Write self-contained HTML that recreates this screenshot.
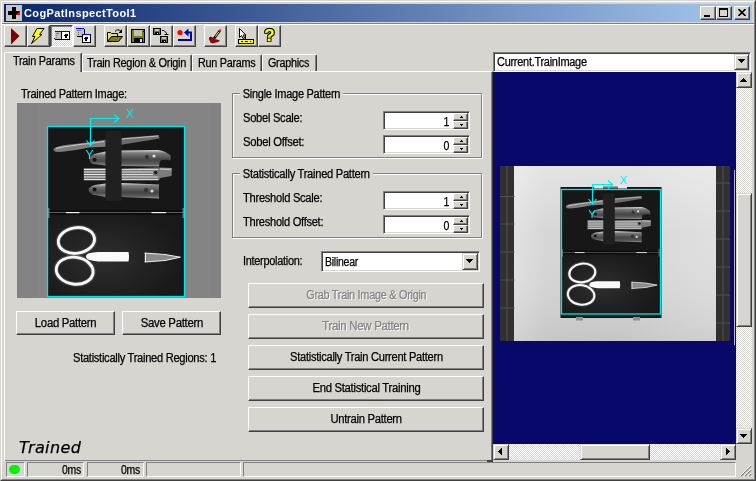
<!DOCTYPE html>
<html><head><meta charset="utf-8"><title>CogPatInspectTool1</title>
<style>
*{box-sizing:border-box;margin:0;padding:0}
html,body{width:756px;height:481px;overflow:hidden;background:#d6d5cf}
body{position:relative;will-change:transform;-webkit-text-stroke:.25px;font-family:"Liberation Sans",sans-serif;font-size:12px;color:#000}
.a{position:absolute}
.t{position:absolute;white-space:nowrap;line-height:14px;height:14px;letter-spacing:-.3px;transform-origin:0 0}
.pbtn span{display:inline-block;letter-spacing:-.3px;transform-origin:50% 50%}
.btn{position:absolute;background:#d6d5cf;border:1px solid;border-color:#fff #404040 #404040 #fff;box-shadow:inset -1px -1px 0 #808080}
.sbtn{position:absolute;background:#d6d5cf;border:1px solid;border-color:#d6d5cf #404040 #404040 #d6d5cf;box-shadow:inset 1px 1px 0 #fff,inset -1px -1px 0 #808080}
.tb{position:absolute;top:25px;width:23px;height:22px;border:1px solid;border-color:#fff #404040 #404040 #fff;box-shadow:inset -1px -1px 0 #808080}
.tb svg{position:absolute;left:0;top:0}
.sunk{position:absolute;background:#fff;border:1px solid;border-color:#808080 #fff #fff #808080;box-shadow:inset 1px 1px 0 #404040,inset -1px -1px 0 #d6d5cf}
.grp{position:absolute;border:1px solid #808080;box-shadow:1px 1px 0 #fff,inset 1px 1px 0 #fff}
.pbtn{position:absolute;height:25px;text-align:center;line-height:22px;white-space:nowrap;border:1px solid;border-color:#fff #404040 #404040 #fff;box-shadow:inset -1px -1px 0 #808080}
.sp{position:absolute;border:1px solid #808080;border-color:#808080 #fff #fff #808080;height:15px;top:462px}
.chk{background-image:conic-gradient(#fff 25%,#d6d5cf 0 50%,#fff 0 75%,#d6d5cf 0);background-size:2px 2px}
</style></head><body>
<!-- window frame -->
<div class="a" style="left:0;top:0;width:756px;height:481px;border:1px solid;border-color:#d6d5cf #404040 #404040 #d6d5cf"></div>
<div class="a" style="left:1px;top:1px;width:754px;height:479px;border:1px solid;border-color:#fff #808080 #808080 #fff"></div>
<!-- title bar -->
<div class="a" style="left:4px;top:4px;width:748px;height:18px;background:linear-gradient(90deg,#0a246a 0%,#a6caf0 100%)"></div>
<div class="a" id="icon" style="left:6px;top:5px;width:16px;height:16px;background:#c6c6c6">
<div class="a" style="left:6px;top:2px;width:4px;height:12px;background:#000"></div>
<div class="a" style="left:2px;top:6px;width:12px;height:4px;background:#000"></div>
<svg class="a" style="left:10px;top:6px" width="4" height="4"><path d="M0 4L4 0L4 4Z" fill="#f00"/></svg>
</div>
<div class="t" id="title" style="-webkit-text-stroke:0;left:24px;top:6px;font-weight:bold;font-size:11px;color:#fff;letter-spacing:.39px">CogPatInspectTool1</div>
<!-- caption buttons -->
<div class="btn" style="left:700px;top:6px;width:16px;height:14px"><div class="a" style="left:3px;top:8px;width:6px;height:2px;background:#000"></div></div>
<div class="btn" style="left:716px;top:6px;width:16px;height:14px"><div class="a" style="left:2px;top:1px;width:9px;height:9px;border:1px solid #000;border-top-width:2px"></div></div>
<div class="btn" style="left:734px;top:6px;width:16px;height:14px"><svg class="a" style="left:3px;top:2px" width="8" height="7"><path d="M0.5 0L7.5 7M7.5 0L0.5 7" stroke="#000" stroke-width="1.6" fill="none"/></svg></div>
<!-- toolbar separator -->
<div class="a" style="left:2px;top:23px;width:752px;height:1px;background:#808080"></div>
<div class="a" style="left:2px;top:24px;width:752px;height:1px;background:#fff"></div>
<!--TOOLBAR-S-->
<div class="tb" style="left:4px"><svg width="21" height="20"><path d="M6 2L14.500 10L6 18.500Z" fill="#800000"/></svg></div>
<div class="tb" style="left:27px"><svg width="21" height="20"><path d="M9 2.500L16 2.500L11.500 8.500L14 8.500L3.500 17.500L7 10.500L4.500 10.500Z" fill="#ffff00" stroke="#000" stroke-width="1"/></svg></div>
<div class="tb chk" style="left:50px;border-color:#404040 #fff #fff #404040;box-shadow:inset 1px 1px 0 #808080"><svg width="21" height="20" shape-rendering="crispEdges"><rect x="4" y="5" width="7" height="8" fill="#c0c0c0"/><rect x="4" y="5" width="15" height="1" fill="#0000ff"/><rect x="4" y="13" width="15" height="1" fill="#000"/><rect x="3" y="12" width="1" height="1" fill="#000"/><rect x="10" y="6" width="1" height="7" fill="#000"/><rect x="5" y="7" width="3" height="1" fill="#808080"/><rect x="5" y="9" width="1" height="1" fill="#808080"/><rect x="5" y="11" width="1" height="1" fill="#808080"/><rect x="11" y="6" width="7" height="7" fill="#fff"/><rect x="18" y="6" width="1" height="8" fill="#000"/><rect x="13" y="8" width="4" height="2" fill="#000"/><rect x="14" y="10" width="2" height="2" fill="#000"/><rect x="13" y="8" width="1" height="1" fill="#fff"/></svg></div>
<div class="tb" style="left:73px"><svg width="21" height="20" shape-rendering="crispEdges"><rect x="2" y="2" width="8" height="8" fill="#c0c0c0"/><rect x="2" y="2" width="8" height="1" fill="#0000ff"/><rect x="10" y="3" width="1" height="8" fill="#000"/><rect x="3" y="10" width="8" height="1" fill="#000"/><rect x="3" y="4" width="4" height="1" fill="#808080"/><rect x="4" y="6" width="1" height="1" fill="#808080"/><rect x="4" y="8" width="1" height="1" fill="#808080"/><rect x="8" y="8" width="9" height="9" fill="#000"/><rect x="9" y="9" width="7" height="7" fill="#fff"/><rect x="8" y="8" width="8" height="1" fill="#0000ff"/><rect x="10" y="11" width="4" height="2" fill="#000"/><rect x="11" y="13" width="2" height="2" fill="#000"/><rect x="10" y="11" width="1" height="1" fill="#fff"/></svg></div>
<div class="tb" style="left:104px"><svg width="21" height="20"><path d="M2.500 15.500L2.500 6.500L5.500 6.500L6.500 7.500L12.500 7.500L12.500 10" fill="#e0e070" stroke="#000"/><path d="M2.500 15.500L6.500 10.500L17.500 10.500L13.500 15.500Z" fill="#808000" stroke="#000"/><path d="M10 5.500Q13 2 16 5.500" fill="none" stroke="#000"/><path d="M17 3L17 7L13.500 7Z" fill="#000"/></svg></div>
<div class="tb" style="left:127px"><svg width="21" height="20" shape-rendering="crispEdges"><rect x="3.500" y="3.500" width="13" height="13" fill="#808000" stroke="#000"/><rect x="6" y="4" width="8" height="6" fill="#c0c0c0"/><rect x="15" y="5" width="1" height="1" fill="#000"/><rect x="6" y="12" width="9" height="5" fill="#000"/><rect x="12" y="13" width="2" height="3" fill="#e0e0e0"/></svg></div>
<div class="tb" style="left:150px"><svg width="21" height="20" shape-rendering="crispEdges"><rect x="2.500" y="2.500" width="7" height="6" fill="#808000" stroke="#000"/><rect x="4" y="3" width="4" height="2" fill="#c0c0c0"/><rect x="4" y="6" width="4" height="3" fill="#000"/><rect x="6" y="7" width="1" height="1" fill="#e0e0e0"/><rect x="9.500" y="10.500" width="7" height="6" fill="#808000" stroke="#000"/><rect x="11" y="11" width="4" height="2" fill="#c0c0c0"/><rect x="11" y="14" width="4" height="3" fill="#000"/><rect x="13" y="15" width="1" height="1" fill="#e0e0e0"/><path d="M11 4.500L13 4.500L15.500 7L15.500 9M13.500 8.500L17.500 8.500" stroke="#000" fill="none" shape-rendering="auto"/></svg></div>
<div class="tb" style="left:173px"><svg width="21" height="20"><circle cx="6" cy="6.500" r="2.600" fill="#ff0000"/><path d="M10 6.500L14.500 2.500L14.500 10.500Z" fill="#0000a8"/><path d="M14 6.500L17 6.500L17 14L4 14" fill="none" stroke="#0000a8" stroke-width="2"/></svg></div>
<div class="tb" style="left:204px"><svg width="21" height="20"><path d="M4 12.500Q3.500 10.500 6 10.800Q8.500 11 9 13Q12 13 15 14.500Q14 16.500 10.500 16.500Q9 17.800 6.500 17Q4.500 16.500 5 15Q3.800 14 4 12.500Z" fill="#900000"/><path d="M9 12.500L15 4.500" stroke="#000" stroke-width="2.300"/><path d="M10.500 10.500L13.800 6" stroke="#ffff60" stroke-width="1"/><path d="M14.300 5.300L15.700 3.400" stroke="#ff2020" stroke-width="2"/></svg></div>
<div class="tb" style="left:235px"><svg width="21" height="20"><path d="M3.500 2.500L3.500 11.500L5.500 9.500L7 12.500L8.500 12L7.200 9L9.800 9Z" fill="#fff" stroke="#000"/><rect x="2.500" y="13.500" width="15" height="4" fill="#ffff00" stroke="#000" shape-rendering="crispEdges"/><path d="M5 15.500L7 15.500M9 15.500L12 15.500M14 15.500L15 15.500" stroke="#000" shape-rendering="crispEdges"/><path d="M9.500 9L9.500 13" stroke="#000" shape-rendering="crispEdges"/></svg></div>
<div class="tb" style="left:258px"><div class="a" style="left:0;top:0;width:21px;height:20px;text-align:center;font-weight:bold;font-size:17px;line-height:20px;color:#ffff00;text-shadow:1px 0 0 #000,-1px 0 0 #000,0 1px 0 #000,0 -1px 0 #000,1px 1px 0 #000,-1px -1px 0 #000,1px -1px 0 #000,-1px 1px 0 #000">?</div></div>
<!--TOOLBAR-E-->
<!--TABS-S-->
<!-- tab page borders -->
<div class="a" style="left:4px;top:71px;width:489px;height:391px;border:1px solid;border-color:#fff #404040 #404040 #fff;box-shadow:inset -1px -1px 0 #808080"></div>
<!-- unselected tabs -->
<div class="a" style="left:82px;top:54px;width:110px;height:17px;border:1px solid;border-color:#fff #404040 transparent #fff;border-bottom:0;border-radius:2px 2px 0 0;box-shadow:inset -1px 0 0 #808080"></div>
<div class="a" style="left:192px;top:54px;width:70px;height:17px;border:1px solid;border-color:#fff #404040 transparent #fff;border-bottom:0;border-radius:2px 2px 0 0;box-shadow:inset -1px 0 0 #808080"></div>
<div class="a" style="left:262px;top:54px;width:55px;height:17px;border:1px solid;border-color:#fff #404040 transparent #fff;border-bottom:0;border-radius:2px 2px 0 0;box-shadow:inset -1px 0 0 #808080"></div>
<!-- selected tab -->
<div class="a" style="left:4px;top:52px;width:78px;height:20px;background:#d6d5cf;border:1px solid;border-color:#fff #404040 transparent #fff;border-bottom:0;border-radius:2px 2px 0 0;box-shadow:inset -1px 0 0 #808080"></div>
<div class="t" id="tab1" style="left:13px;top:54px;transform:scaleX(0.908)">Train Params</div>
<div class="t" id="tab2" style="left:87px;top:56px;transform:scaleX(0.912)">Train Region &amp; Origin</div>
<div class="t" id="tab3" style="left:198px;top:56px;transform:scaleX(0.900)">Run Params</div>
<div class="t" id="tab4" style="left:268px;top:56px;transform:scaleX(0.899)">Graphics</div>
<!--TABS-E-->
<!--LEFT-S-->
<div class="t" id="tpi" style="left:21px;top:87px;transform:scaleX(0.914)">Trained Pattern Image:</div>
<div class="a" style="left:17px;top:103px;width:204px;height:195px;background:#828282"></div>
<!--IMG1-S-->
<svg class="a" style="left:17px;top:103px" width="204" height="195" viewBox="17 103 204 195">
<defs>
<radialGradient id="glow1" cx="0.4" cy="0.55" r="0.6"><stop offset="0" stop-color="#2e2e2e"/><stop offset="1" stop-color="#191919"/></radialGradient>
<linearGradient id="met1" x1="0" y1="0" x2="0" y2="1"><stop offset="0" stop-color="#e0e0e0"/><stop offset="0.18" stop-color="#7a7a7a"/><stop offset="0.6" stop-color="#444"/><stop offset="0.85" stop-color="#5a5a5a"/><stop offset="1" stop-color="#9a9a9a"/></linearGradient>
<linearGradient id="met2" x1="0" y1="0" x2="0" y2="1"><stop offset="0" stop-color="#d8d8d8"/><stop offset="0.3" stop-color="#6a6a6a"/><stop offset="0.7" stop-color="#4a4a4a"/><stop offset="1" stop-color="#8a8a8a"/></linearGradient>
</defs>
<rect x="38" y="103" width="173" height="195" fill="#848484"/>
<g id="casec">
<rect x="47" y="126" width="138" height="171" fill="#171717"/>
<rect x="48" y="214" width="136" height="82" fill="url(#glow1)"/>
<!-- strap -->
<rect x="105.500" y="131" width="16" height="70" fill="#202020"/>
<!-- tool 1 -->
<path d="M53.500 149 Q56 145.500 70 144.500 L89.600 142.200 L105.500 139.800 L105.500 146.800 L89.600 147.600 Q66 152 58 152 Q53 151.500 53.500 149Z" fill="#7c7c7c"/>
<path d="M56 148.500 Q70 145.500 89 143.500 L104 141.500" stroke="#c8c8c8" stroke-width="1.200" fill="none"/>
<path d="M121.500 137.900 L159 134.900 L159.500 138.600 L121.500 144.800Z" fill="#6c6c6c"/>
<path d="M122 139 L158 136" stroke="#c0c0c0" stroke-width="1" fill="none"/>
<!-- tool 2 -->
<path d="M105.500 151.500 L96 153.500 Q89.500 155 89.500 159.500 Q89.500 164 96 164.300 L105.500 165.500Z" fill="url(#met2)"/>
<circle cx="94.600" cy="159.700" r="2" fill="#101010"/>
<path d="M121.500 150.500 L158 150 Q166 151 171 156 L170.500 160.500 Q165 159 160 161 L159 166.500 L121.500 166Z" fill="url(#met1)"/>
<circle cx="147" cy="157" r="2" fill="#303030"/><circle cx="154" cy="156" r="1.600" fill="#e0e0e0"/>
<!-- tool 3 -->
<rect x="83.700" y="168" width="21.800" height="12.500" fill="#707070"/>
<path d="M84 169.500H105.500M84 172H105.500M84 174.500H105.500M84 177H105.500M84 179.500H105.500" stroke="#e8e8e8" stroke-width="1"/>
<path d="M121.500 168.500 L160 167.600 L172 168 L171.500 176 L160 178 L159 180.500 L121.500 180.500Z" fill="#7c7c7c"/>
<path d="M122 169.500H158M122 172H153M122 174.500H153M122 177H158M122 179.500H158" stroke="#d8d8d8" stroke-width="1"/>
<circle cx="155.700" cy="172.600" r="1.800" fill="#202020"/>
<path d="M160 169 L171 169.500" stroke="#c0c0c0" stroke-width="1.500"/>
<!-- tool 4 -->
<path d="M105.500 183.500 L95 185 Q88.500 187 88.500 190 Q89 193.500 95 195 L105.500 197Z" fill="url(#met2)"/>
<circle cx="94.600" cy="189.600" r="2" fill="#101010"/>
<path d="M121.500 183 L159 184.500 L159 198.400 L121.500 197Z" fill="url(#met1)"/>
<circle cx="146" cy="190" r="2" fill="#303030"/><circle cx="152" cy="191" r="1.600" fill="#d8d8d8"/>
<!-- hinge -->
<rect x="48" y="210" width="136" height="5" fill="#0c0c0c"/>
<rect x="48" y="212" width="136" height="1" fill="#5a5a5a"/>
<rect x="66" y="212" width="13.500" height="1.200" fill="#f0f0f0"/><rect x="48" y="208" width="1.500" height="10" fill="#707070"/><rect x="182.500" y="208" width="1.500" height="10" fill="#707070"/>
<rect x="151.500" y="212" width="14.500" height="1.200" fill="#f0f0f0"/>
<!-- scissors -->
<ellipse cx="76.400" cy="240.500" rx="18.300" ry="12.900" fill="none" stroke="#808080" stroke-opacity=".35" stroke-width="5" transform="rotate(-8 76.400 240.500)"/>
<ellipse cx="76.400" cy="240.500" rx="18.200" ry="12.800" fill="none" stroke="#f8f8f8" stroke-width="2.900" transform="rotate(-8 76.400 240.500)"/>
<ellipse cx="74.700" cy="270.700" rx="18.600" ry="13.500" fill="none" stroke="#808080" stroke-opacity=".35" stroke-width="5" transform="rotate(8 74.700 270.700)"/>
<ellipse cx="74.700" cy="270.700" rx="18.500" ry="13.400" fill="none" stroke="#f8f8f8" stroke-width="2.900" transform="rotate(8 74.700 270.700)"/>
<path d="M88 253.500 Q93 252 98 252 L128.500 252 Q129.500 256.500 128.500 261.400 L98 261.400 Q93 261 88 259.500 Q84 256.500 88 253.500Z" fill="#fafafa"/>
<path d="M144.600 253 L165 254.500 L180.400 257.200 L165 260.500 L144.600 262Z" fill="#8a8a8a"/>
<path d="M144.600 253 L165 254.500 L180.400 257.200 M144.600 262 L165 260.500 L180.400 257.200 M145.500 253 L145.500 262" stroke="#f0f0f0" stroke-width="1" fill="none"/>
</g>
<!-- cyan rect & axes -->
<rect x="47.500" y="126.500" width="137" height="170" fill="none" stroke="#00e8e8" stroke-width="1.300"/>
<path d="M90.500 145 L90.500 118.500 L119 118.500 M114 114.500 L119 118.500 L114 122.500 M86.500 140.500 L90.500 145.500 L94.500 140.500" stroke="#00f0f0" stroke-width="1.200" fill="none"/>
<text x="125.800" y="117.800" font-family="Liberation Sans,sans-serif" font-size="12" fill="#00f0f0" stroke="none" style="-webkit-text-stroke:0">X</text>
<text x="85.500" y="158.600" font-family="Liberation Sans,sans-serif" font-size="12" fill="#00f0f0" stroke="none" style="-webkit-text-stroke:0">Y</text>
</svg>
<!--IMG1-E-->
<div class="pbtn" style="left:16px;top:311px;width:99px;height:24px"><span id="b_load" style="transform:scaleX(0.943)">Load Pattern</span></div>
<div class="pbtn" style="left:122px;top:311px;width:99px;height:24px"><span id="b_save" style="transform:scaleX(0.949)">Save Pattern</span></div>
<div class="t" id="str" style="left:73px;top:351px;transform:scaleX(0.926)">Statistically Trained Regions: 1</div>
<div class="t" id="trained" style="left:19px;top:438px;font-family:'DejaVu Sans',sans-serif;font-style:italic;font-size:16px;line-height:20px;height:20px;letter-spacing:.4px">Trained</div>
<!--LEFT-E-->
<!--MID-S-->
<div class="grp" style="left:232px;top:93px;width:250px;height:65px"></div>
<div class="t" id="g1" style="left:240px;top:87px;background:#d6d5cf;padding:0 3px;transform:scaleX(0.918)">Single Image Pattern</div>
<div class="t" id="l1" style="left:243px;top:111px;transform:scaleX(0.929)">Sobel Scale:</div>
<div class="t" id="l2" style="left:243px;top:135px;transform:scaleX(0.938)">Sobel Offset:</div>
<div class="grp" style="left:232px;top:173px;width:250px;height:65px"></div>
<div class="t" id="g2" style="left:240px;top:167px;background:#d6d5cf;padding:0 3px;transform:scaleX(0.929)">Statistically Trained Pattern</div>
<div class="t" id="l3" style="left:243px;top:191px;transform:scaleX(0.929)">Threshold Scale:</div>
<div class="t" id="l4" style="left:243px;top:215px;transform:scaleX(0.925)">Threshold Offset:</div>
<div class="t" id="l5" style="left:243px;top:254px;transform:scaleX(0.909)">Interpolation:</div>
<!-- spin boxes -->
<div class="sunk" style="left:383px;top:111px;width:87px;height:19px"></div>
<div class="sunk" style="left:383px;top:135px;width:87px;height:19px"></div>
<div class="sunk" style="left:383px;top:191px;width:87px;height:19px"></div>
<div class="sunk" style="left:383px;top:215px;width:87px;height:19px"></div>
<div class="t" style="left:400px;top:115px;width:49px;text-align:right;transform-origin:100% 0;transform:scaleX(.88)">1</div>
<div class="t" style="left:400px;top:139px;width:49px;text-align:right;transform-origin:100% 0;transform:scaleX(.88)">0</div>
<div class="t" style="left:400px;top:195px;width:49px;text-align:right;transform-origin:100% 0;transform:scaleX(.88)">1</div>
<div class="t" style="left:400px;top:219px;width:49px;text-align:right;transform-origin:100% 0;transform:scaleX(.88)">0</div>
<!--SPIN-S-->
<div class="btn" style="left:453px;top:113px;width:15px;height:8px"><div class="a" style="left:7px;top:2px;width:1px;height:1px;background:#000"></div><div class="a" style="left:6px;top:3px;width:3px;height:1px;background:#000"></div></div>
<div class="btn" style="left:453px;top:121px;width:15px;height:8px"><div class="a" style="left:6px;top:2px;width:3px;height:1px;background:#000"></div><div class="a" style="left:7px;top:3px;width:1px;height:1px;background:#000"></div></div>
<div class="btn" style="left:453px;top:137px;width:15px;height:8px"><div class="a" style="left:7px;top:2px;width:1px;height:1px;background:#000"></div><div class="a" style="left:6px;top:3px;width:3px;height:1px;background:#000"></div></div>
<div class="btn" style="left:453px;top:145px;width:15px;height:8px"><div class="a" style="left:6px;top:2px;width:3px;height:1px;background:#000"></div><div class="a" style="left:7px;top:3px;width:1px;height:1px;background:#000"></div></div>
<div class="btn" style="left:453px;top:193px;width:15px;height:8px"><div class="a" style="left:7px;top:2px;width:1px;height:1px;background:#000"></div><div class="a" style="left:6px;top:3px;width:3px;height:1px;background:#000"></div></div>
<div class="btn" style="left:453px;top:201px;width:15px;height:8px"><div class="a" style="left:6px;top:2px;width:3px;height:1px;background:#000"></div><div class="a" style="left:7px;top:3px;width:1px;height:1px;background:#000"></div></div>
<div class="btn" style="left:453px;top:217px;width:15px;height:8px"><div class="a" style="left:7px;top:2px;width:1px;height:1px;background:#000"></div><div class="a" style="left:6px;top:3px;width:3px;height:1px;background:#000"></div></div>
<div class="btn" style="left:453px;top:225px;width:15px;height:8px"><div class="a" style="left:6px;top:2px;width:3px;height:1px;background:#000"></div><div class="a" style="left:7px;top:3px;width:1px;height:1px;background:#000"></div></div>
<!--SPIN-E-->
<!-- combo -->
<div class="sunk" style="left:321px;top:251px;width:159px;height:21px"></div>
<div class="t" id="bil" style="left:325px;top:255px;transform:scaleX(0.878)">Bilinear</div>
<div class="sbtn" style="left:462px;top:253px;width:16px;height:17px"><svg class="a" style="left:3px;top:5px" width="7" height="4" shape-rendering="crispEdges"><path d="M0 0L7 0L3.500 4Z" fill="#000"/></svg></div>
<!-- buttons -->
<div class="pbtn" style="left:248px;top:283px;width:236px;color:#848484"><span id="b1" style="text-shadow:1px 1px 0 #fff;transform:scaleX(0.906)">Grab Train Image &amp; Origin</span></div>
<div class="pbtn" style="left:248px;top:314px;width:236px;color:#848484"><span id="b2" style="text-shadow:1px 1px 0 #fff;transform:scaleX(0.951)">Train New Pattern</span></div>
<div class="pbtn" style="left:248px;top:345px;width:236px"><span id="b3" style="transform:scaleX(0.926)">Statistically Train Current Pattern</span></div>
<div class="pbtn" style="left:248px;top:376px;width:236px"><span id="b4" style="transform:scaleX(0.940)">End Statistical Training</span></div>
<div class="pbtn" style="left:248px;top:407px;width:236px"><span id="b5" style="transform:scaleX(0.937)">Untrain Pattern</span></div>
<!--MID-E-->
<!--RIGHT-S-->
<div class="sunk" style="left:493px;top:52px;width:258px;height:20px"></div>
<div class="t" id="cti" style="left:497px;top:55px;transform:scaleX(0.914)">Current.TrainImage</div>
<div class="sbtn" style="left:734px;top:54px;width:15px;height:16px"><svg class="a" style="left:3px;top:4px" width="7" height="4" shape-rendering="crispEdges"><path d="M0 0L7 0L3.500 4Z" fill="#000"/></svg></div>
<div class="a" style="left:493px;top:72px;width:243px;height:372px;background:#08086b"></div>
<!--IMG2-S-->
<svg class="a" style="left:500px;top:166px" width="230" height="175" viewBox="500 166 230 175">
<defs>
<linearGradient id="wall" x1="0" y1="0" x2="1" y2="0"><stop offset="0" stop-color="#e6e6e6"/><stop offset="0.2" stop-color="#d6d6d6"/><stop offset="0.5" stop-color="#d4d4d4"/><stop offset="0.8" stop-color="#dcdcdc"/><stop offset="1" stop-color="#e0e0e0"/></linearGradient>
<linearGradient id="wallv" x1="0" y1="0" x2="0" y2="1"><stop offset="0" stop-color="#fff" stop-opacity=".35"/><stop offset="0.4" stop-color="#fff" stop-opacity="0"/><stop offset="1" stop-color="#000" stop-opacity=".07"/></linearGradient>
</defs>
<rect x="500" y="166" width="230" height="175" fill="url(#wall)"/><rect x="500" y="166" width="230" height="175" fill="url(#wallv)"/>
<rect x="500" y="166" width="14" height="175" fill="#303030"/>
<rect x="716" y="166" width="14" height="175" fill="#303030"/>
<path d="M500 196.500H514.500M500 224H514.500M500 252H514.500M500 280H514.500M500 308H514.500M716 183H730M716 211H730M716 239H730M716 267H730M716 295H730M716 323H730M507 166V341M723 166V341" stroke="#505050" stroke-width="1"/>
<!-- case body -->
<rect x="560.500" y="187" width="101" height="131" fill="#141414"/>
<rect x="594" y="185" width="9" height="3.500" fill="#e8e8e8"/><rect x="618" y="185" width="9" height="3.500" fill="#e8e8e8"/><rect x="603" y="186.500" width="15" height="2" fill="#707070"/>
<rect x="576" y="317" width="7" height="3.500" fill="#909090"/><rect x="633" y="317" width="7" height="3.500" fill="#909090"/>
<g transform="translate(561.500 190) scale(0.7196 0.7274) translate(-47.500 -126.500)"><use href="#casec"/></g>
<rect x="561.500" y="189.500" width="99" height="124.500" fill="none" stroke="#00e8e8" stroke-width="1.300"/>
<path d="M592.500 203.500 L592.500 184.500 L612.500 184.500 M608 180.500 L612.500 184.500 L608 188.500 M588.500 199 L592.500 204 L596.500 199" stroke="#00f0f0" stroke-width="1.200" fill="none"/>
<text x="620" y="183.600" font-family="Liberation Sans,sans-serif" font-size="11" fill="#00f0f0" stroke="none" style="-webkit-text-stroke:0">X</text>
<text x="588.200" y="217.700" font-family="Liberation Sans,sans-serif" font-size="11.500" fill="#00f0f0" stroke="none" style="-webkit-text-stroke:0">Y</text>
</svg>
<div class="a" style="left:734px;top:170px;width:1px;height:175px;background:#b8b8c8"></div>
<!--IMG2-E-->
<!-- vscroll -->
<div class="a chk" style="left:736px;top:72px;width:16px;height:372px"></div>
<div class="sbtn" style="left:736px;top:72px;width:16px;height:16px"><svg class="a" style="left:3px;top:5px" width="7" height="4" shape-rendering="crispEdges"><path d="M0 4L7 4L3.500 0Z" fill="#000"/></svg></div>
<div class="sbtn" style="left:736px;top:193px;width:16px;height:134px"></div>
<div class="sbtn" style="left:736px;top:428px;width:16px;height:16px"><svg class="a" style="left:3px;top:5px" width="7" height="4" shape-rendering="crispEdges"><path d="M0 0L7 0L3.500 4Z" fill="#000"/></svg></div>
<!-- hscroll -->
<div class="a chk" style="left:493px;top:444px;width:243px;height:16px"></div>
<div class="sbtn" style="left:493px;top:444px;width:16px;height:16px"><svg class="a" style="left:4px;top:3px" width="4" height="7" shape-rendering="crispEdges"><path d="M4 0L4 7L0 3.500Z" fill="#000"/></svg></div>
<div class="sbtn" style="left:720px;top:444px;width:16px;height:16px"><svg class="a" style="left:5px;top:3px" width="4" height="7" shape-rendering="crispEdges"><path d="M0 0L0 7L4 3.500Z" fill="#000"/></svg></div>
<div class="sbtn" style="left:580px;top:444px;width:70px;height:16px"></div>
<!--RIGHT-E-->
<!--STATUS-S-->
<div class="a" style="left:2px;top:461px;width:752px;height:17px;background:#d6d5cf"></div>
<div class="a" style="left:487px;top:460px;width:6px;height:2px;background:#404040"></div>
<div class="sp" style="left:6px;width:19px"><div class="a" style="left:2px;top:2px;width:11px;height:9px;border-radius:5px/4.500px;background:#00f400"></div></div>
<div class="sp" style="left:27px;width:57px"></div>
<div class="sp" style="left:87px;width:57px"></div>
<div class="sp" style="left:146px;width:95px"></div>
<div class="sp" style="left:243px;width:493px"></div>
<div class="t" id="ms1" style="left:40px;top:463px;width:41px;text-align:right;transform-origin:100% 0;transform:scaleX(.87)">0ms</div>
<div class="t" id="ms2" style="left:99px;top:463px;width:41px;text-align:right;transform-origin:100% 0;transform:scaleX(.87)">0ms</div>
<svg class="a" style="left:740px;top:465px" width="12" height="12"><path d="M11 1L1 11M11 5L5 11M11 9L9 11" stroke="#808080" stroke-width="1.400"/><path d="M11 0L0 11M11 4L4 11M11 8L8 11" stroke="#fff" stroke-width="1"/></svg>
<!--STATUS-E-->
</body></html>
